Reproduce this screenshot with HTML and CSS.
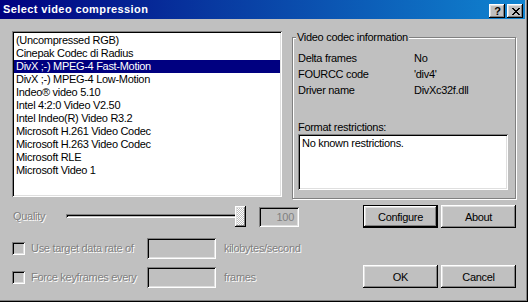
FILE: index.html
```html
<!DOCTYPE html>
<html>
<head>
<meta charset="utf-8">
<link rel="stylesheet" href="styles.css">
</head>
<body>
<div class="window">
  <div class="titlebar">
    <span class="title">Select video compression</span>
    <div class="tb-buttons">
      <span class="tb-btn help">?</span>
      <span class="tb-btn close"><svg width="8" height="7" viewBox="0 0 8 7" shape-rendering="crispEdges"><path d="M0 0h2v1h-2z M6 0h2v1h-2z M1 1h2v1h-2z M5 1h2v1h-2z M2 2h4v1h-4z M3 3h2v1h-2z M2 4h4v1h-4z M1 5h2v1h-2z M5 5h2v1h-2z M0 6h2v1h-2z M6 6h2v1h-2z" fill="#000"/></svg></span>
    </div>
  </div>
  <div class="body">
    <div class="top">
      <ul class="listbox">
        <li>(Uncompressed RGB)</li>
        <li>Cinepak Codec di Radius</li>
        <li class="selected">DivX ;-) MPEG-4 Fast-Motion</li>
        <li>DivX ;-) MPEG-4 Low-Motion</li>
        <li>Indeo® video 5.10</li>
        <li>Intel 4:2:0 Video V2.50</li>
        <li>Intel Indeo(R) Video R3.2</li>
        <li>Microsoft H.261 Video Codec</li>
        <li>Microsoft H.263 Video Codec</li>
        <li>Microsoft RLE</li>
        <li>Microsoft Video 1</li>
      </ul>
      <fieldset class="group">
        <legend>Video codec information</legend>
        <div class="info">
          <span>Delta frames</span><span>No</span>
          <span>FOURCC code</span><span>'div4'</span>
          <span>Driver name</span><span>DivXc32f.dll</span>
        </div>
        <div class="fr-label">Format restrictions:</div>
        <div class="fr-box">No known restrictions.</div>
      </fieldset>
    </div>
    <div class="row-quality">
      <span class="disabled q-label">Quality</span>
      <div class="slider"><div class="track"></div><div class="thumb"></div></div>
      <div class="field q-field">100</div>
      <div class="btns">
        <button class="btn default">Configure</button>
        <button class="btn">About</button>
      </div>
    </div>
    <div class="bottom">
      <div class="options">
        <div class="opt">
          <span class="check"></span>
          <span class="disabled opt-label">Use target data rate of</span>
          <span class="field opt-field"></span>
          <span class="disabled">kilobytes/second</span>
        </div>
        <div class="opt">
          <span class="check"></span>
          <span class="disabled opt-label">Force keyframes every</span>
          <span class="field opt-field"></span>
          <span class="disabled">frames</span>
        </div>
      </div>
      <div class="btns">
        <button class="btn">OK</button>
        <button class="btn">Cancel</button>
      </div>
    </div>
  </div>
</div>
</body>
</html>
```

FILE: styles.css
```css
* { box-sizing: border-box; }
html, body {
  margin: 0;
  padding: 0;
  background: #c0c0c0;
}
body {
  font-family: "Liberation Sans", Arial, sans-serif;
  font-size: 11px;
  line-height: 13px;
  letter-spacing: -0.3px;
  color: #000;
}
.window {
  width: 528px;
  height: 302px;
  background: #c0c0c0;
  border-right: 1px solid #000;
  border-bottom: 1px solid #000;
  box-shadow: inset -1px -1px 0 #808080;
  overflow: hidden;
}
.titlebar {
  height: 19px;
  margin-right: 2px;
  display: flex;
  align-items: flex-start;
  justify-content: space-between;
  background: linear-gradient(90deg, #000080 0%, #0838a0 40%, #1084d0 100%);
  padding: 0 2px 0 3px;
}
.title {
  color: #fff;
  font-weight: bold;
  font-size: 11px;
  line-height: 19px;
  letter-spacing: 0.4px;
}
.tb-buttons {
  display: flex;
  gap: 2px;
  padding-top: 4px;
}
.tb-btn {
  width: 16px;
  height: 14px;
  display: flex;
  align-items: center;
  justify-content: center;
  background: #c0c0c0;
  box-shadow: inset -1px -1px #000, inset 1px 1px #fff, inset -2px -2px #808080, inset 2px 2px #dfdfdf;
}
.help {
  font-weight: bold;
  font-size: 11px;
  line-height: 14px;
  letter-spacing: 0;
  padding-left: 1px;
}
.close svg { display: block; margin-left: 1px; }

.body {
  padding: 12px 11px 0 12px;
}
.top {
  display: flex;
  align-items: flex-start;
}
.listbox {
  list-style: none;
  margin: 0;
  width: 270px;
  height: 166px;
  padding: 3px 2px 2px 2px;
  background: #fff;
  box-shadow: inset 1px 1px #808080, inset -1px -1px #fff, inset 2px 2px #000, inset -2px -2px #dfdfdf;
}
.listbox li {
  height: 13px;
  line-height: 13px;
  padding-left: 2px;
  white-space: nowrap;
}
.listbox li.selected {
  background: #000080;
  color: #fff;
}
.group {
  margin: 0 0 0 10px;
  width: 224px;
  padding: 0 7px 8px 5px;
  border: 1px solid #808080;
  box-shadow: 1px 1px 0 #fff, inset 1px 1px 0 #fff;
  min-inline-size: 0;
}
.group legend {
  padding: 0 1px;
  margin-left: -2px;
  line-height: 13px;
  background: #c0c0c0;
}
.info {
  display: grid;
  grid-template-columns: 116px 1fr;
  line-height: 16px;
  padding-top: 6px;
}
.fr-label {
  margin-top: 23px;
  line-height: 13px;
}
.fr-box {
  width: 210px;
  height: 56px;
  background: #fff;
  padding: 3px 4px;
  box-shadow: inset 1px 1px #808080, inset -1px -1px #fff, inset 2px 2px #000, inset -2px -2px #dfdfdf;
}

.disabled {
  color: #808080;
  text-shadow: 1px 1px 0 #fff;
  white-space: nowrap;
}
.field {
  background: #c0c0c0;
  box-shadow: inset 1px 1px #808080, inset -1px -1px #fff, inset 2px 2px #000, inset -2px -2px #dfdfdf;
}
.row-quality {
  display: flex;
  align-items: center;
  height: 23px;
  margin-top: 6px;
}
.q-label {
  margin-left: 1px;
  width: 53px;
}
.slider {
  position: relative;
  width: 180px;
  height: 21px;
}
.track {
  margin-top: 8px;
  height: 4px;
  width: 178px;
  background: #c0c0c0;
  box-shadow: inset 1px 1px #808080, inset -1px -1px #fff, inset 2px 2px #000;
}
.thumb {
  position: absolute;
  right: 0;
  top: 0;
  width: 11px;
  height: 21px;
  background-color: #c0c0c0;
  background-image: repeating-conic-gradient(#fff 0 25%, #c0c0c0 0 50%);
  background-size: 2px 2px;
  box-shadow: inset -1px -1px #000, inset 1px 1px #fff, inset -2px -2px #808080, inset 2px 2px #dfdfdf;
}
.q-field {
  margin-left: 13px;
  width: 40px;
  height: 20px;
  color: #808080;
  text-align: right;
  padding: 3px 5px 0 0;
  line-height: 14px;
}
.btns {
  margin-left: auto;
  display: flex;
  gap: 3px;
}
.btn {
  width: 75px;
  height: 23px;
  border: none;
  margin: 0;
  padding: 0;
  font-family: inherit;
  font-size: 11px;
  letter-spacing: -0.3px;
  color: #000;
  background: #c0c0c0;
  box-shadow: inset -1px -1px #000, inset 1px 1px #fff, inset -2px -2px #808080, inset 2px 2px #dfdfdf;
}
.btn.default {
  box-shadow: inset 0 0 0 1px #000, inset -2px -2px #000, inset 2px 2px #fff, inset -3px -3px #808080, inset 3px 3px #dfdfdf;
}
.bottom {
  display: flex;
  margin-top: 10px;
}
.bottom .btns {
  align-self: flex-end;
}
.options {
  display: flex;
  flex-direction: column;
  gap: 8px;
}
.opt {
  display: flex;
  align-items: center;
  height: 21px;
}
.check {
  width: 13px;
  height: 13px;
  margin-right: 6px;
  background: #c0c0c0;
  box-shadow: inset 1px 1px #808080, inset -1px -1px #fff, inset 2px 2px #000, inset -2px -2px #dfdfdf;
}
.opt-label {
  width: 116px;
}
.opt-field {
  width: 69px;
  height: 21px;
  margin-right: 8px;
}
```
